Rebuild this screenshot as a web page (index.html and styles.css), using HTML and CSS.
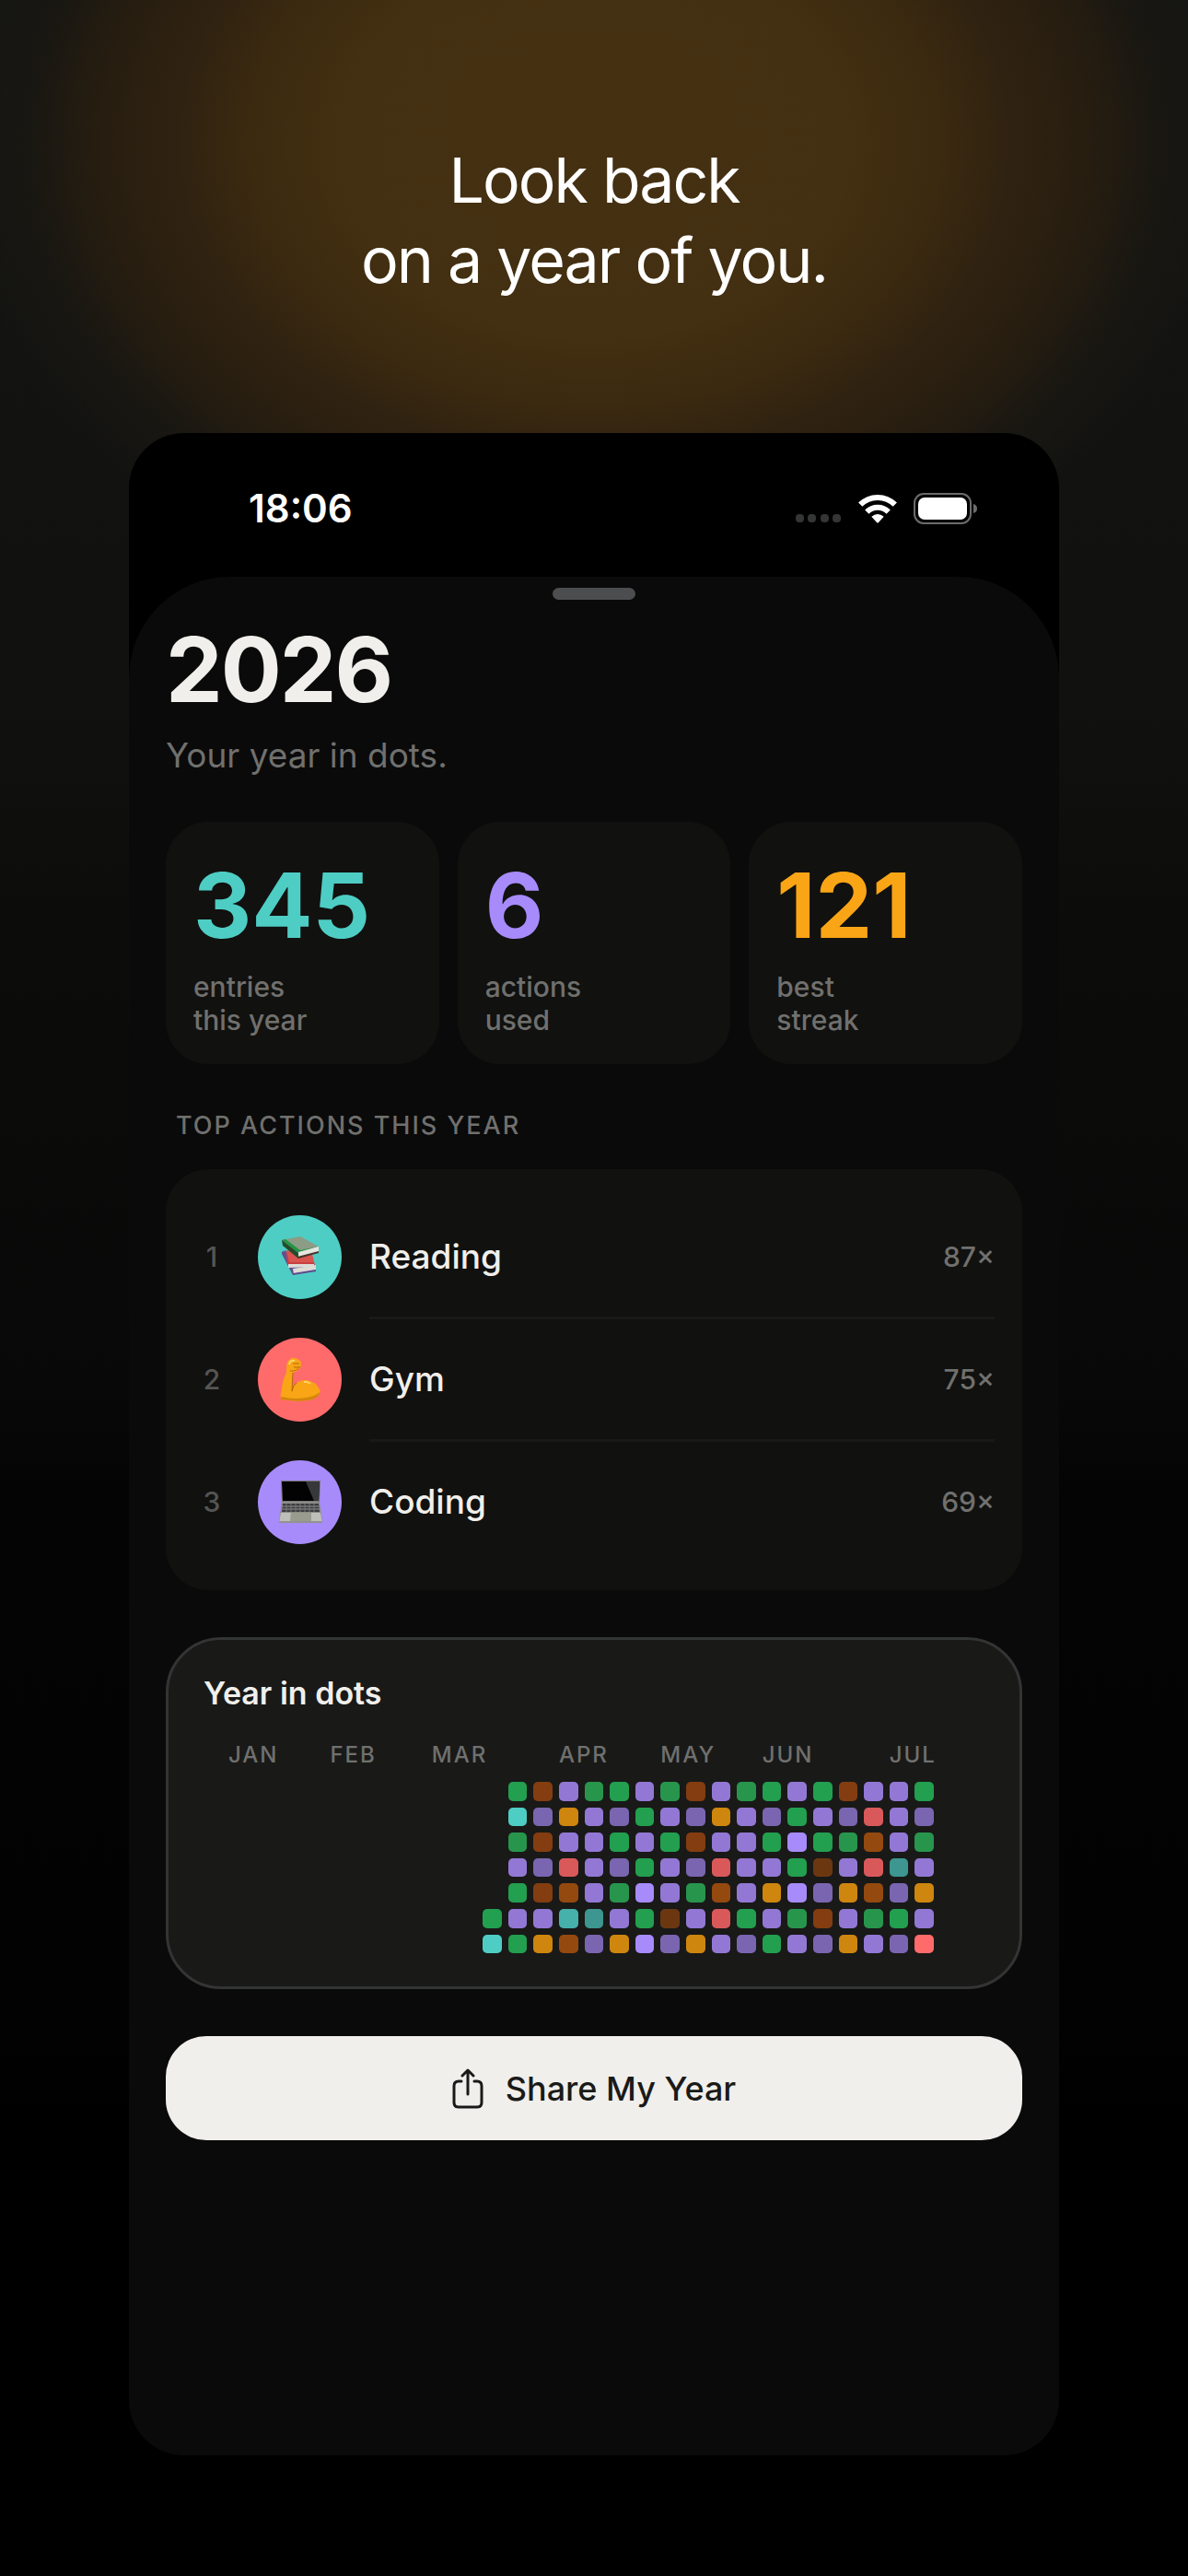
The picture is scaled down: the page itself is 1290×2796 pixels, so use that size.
FILE: index.html
```html
<!DOCTYPE html>
<html lang="en">
<head>
<meta charset="utf-8">
<meta name="viewport" content="width=device-width, initial-scale=1">
<title>Look back on a year of you</title>
<link rel="stylesheet" href="styles.css">
</head>
<body>
<main class="page">
  <h1 class="headline">Look back<br>on a year of you.</h1>

  <div class="phone">
    <div class="status">
      <time class="clock">18:06</time>
      <div class="indicators">
        <svg class="signal" width="50" height="32" viewBox="0 0 50 32" fill="#343535" aria-hidden="true">
          <rect x="0" y="22" width="9" height="9" rx="4"/><rect x="13" y="22" width="9" height="9" rx="4"/><rect x="27" y="22" width="9" height="9" rx="4"/><rect x="40" y="22" width="9" height="9" rx="4"/>
        </svg>
        <svg class="wifi" width="42" height="32" viewBox="0 0 42 32" aria-hidden="true">
          <g fill="none" stroke="#fff" stroke-width="6">
            <path d="M2.200 11.700A26.500 26.500 0 0 1 39.800 11.700"/>
            <path d="M9.300 19.600A16.600 16.600 0 0 1 32.700 19.600"/>
          </g>
          <path d="M14.300 24.800Q21 19.300 27.700 24.800L22 31Q21 32 20 31Z" fill="#fff"/>
        </svg>
        <svg class="battery" width="69" height="34" viewBox="0 0 69 34" aria-hidden="true">
          <rect x="1" y="1" width="61" height="32" rx="10" fill="none" stroke="#6b6b6b" stroke-width="2"/>
          <rect x="5" y="5" width="53" height="24" rx="7" fill="#fff"/>
          <path d="M65 12q4 1 4 5t-4 5z" fill="#6b6b6b"/>
        </svg>
      </div>
    </div>

    <section class="sheet">
      <div class="handle"></div>
      <h2 class="year">2026</h2>
      <p class="tagline">Your year in dots.</p>

      <div class="stats">
        <div class="stat"><strong class="figure teal">345</strong><span class="caption">entries<br>this year</span></div>
        <div class="stat"><strong class="figure violet">6</strong><span class="caption">actions<br>used</span></div>
        <div class="stat"><strong class="figure amber">121</strong><span class="caption">best<br>streak</span></div>
      </div>

      <h3 class="section-title">TOP ACTIONS THIS YEAR</h3>
      <ol class="actions">
        <li class="action">
          <span class="rank">1</span>
          <span class="badge badge-teal">
            <svg width="44" height="46" viewBox="0 0 44 46" aria-hidden="true">
              <path d="M2 18l4 -2 8 17 24 -2 1 5 -25 6z" fill="#65518f"/>
              <path d="M14 36l25 -4v5l-24 5z" fill="#dedbd6"/>
              <path d="M14 41l25 -4v2l-25 4L2 20v-3z" fill="#60498b"/>
              <path d="M7 16l28 4 3 12 -29 -1z" fill="#d9534f"/>
              <path d="M9 30h28v4l-28 1z" fill="#dedbd6"/>
              <path d="M7 16l3 13h27v2H8z" fill="#c73e42"/>
              <path d="M2 5l20 -4 20 11 -22 9z" fill="#8d9c85"/>
              <path d="M2 5l4 -1 16 12 20 -4 -22 7z" fill="#229547"/>
              <path d="M20 18l22 -6v6l-22 6z" fill="#e8e5e0"/>
              <path d="M2 5l18 14v6L3 11z" fill="#244c2c"/>
              <path d="M19 23l23 -6v2l-22 6z" fill="#463428"/>
            </svg>
          </span>
          <div class="entry"><span class="name">Reading</span><span class="count">87×</span></div>
        </li>
        <li class="action">
          <span class="rank">2</span>
          <span class="badge badge-coral">
            <svg width="46" height="48" viewBox="0 0 46 48" aria-hidden="true">
              <path d="M8 12Q8 3 14 1Q18 0 23 4Q25 8 23 12Q19 16 15 17Q14 25 15 33Q20 24 30 25Q40 26 45 37Q43 44 36 46Q24 49 11 47L2 46Q1 42 3 34Q4 24 8 17Z" fill="#f9a516"/>
              <path d="M2 43Q20 47 34 43Q42 41 45 37Q43 44 36 46Q24 49 11 47L2 46Z" fill="#d4860d"/>
              <path d="M15 17L14 37Q15 31 19 28M12 15Q19 16 23 10M15 7h7M16 11h6" fill="none" stroke="#b6690b" stroke-width="1"/>
              <path d="M11 8Q12 3 17 4M27 27Q31 26 34 29" fill="none" stroke="#ffd265" stroke-width="2"/>
            </svg>
          </span>
          <div class="entry"><span class="name">Gym</span><span class="count">75×</span></div>
        </li>
        <li class="action">
          <span class="rank">3</span>
          <span class="badge badge-violet">
            <svg width="48" height="48" viewBox="0 0 48 48" aria-hidden="true">
              <path d="M3 1h43l-1 24H4z" fill="#77777b"/>
              <path d="M4 2h41l-1 21H5z" fill="#030303"/>
              <path d="M30 2h15l-1 21h-5z" fill="#37383c"/>
              <path d="M4 24h41l3 21H1z" fill="#8c8c88"/>
              <path d="M5 26h39l1 9H4z" fill="#3c3d3f"/>
              <path d="M4 29h40M4 32h41" stroke="#909090" stroke-width="1"/>
              <path d="M9 26v9M14 26v9M19 26v9M24 26v9M29 26v9M34 26v9M39 26v9" stroke="#77777a" stroke-width="1"/>
              <path d="M3 36h43l2 11H1z" fill="#bebeba"/>
              <path d="M14 36h22v9H13z" fill="#989b8d"/>
              <path d="M1 45h47v2H1z" fill="#92928f"/>
            </svg>
          </span>
          <div class="entry"><span class="name">Coding</span><span class="count">69×</span></div>
        </li>
      </ol>

      <section class="dots-card">
        <h3 class="dots-title">Year in dots</h3>
        <div class="months">
          <span class="jan">JAN</span><span class="feb">FEB</span><span class="mar">MAR</span><span class="apr">APR</span><span class="may">MAY</span><span class="jun">JUN</span><span class="jul">JUL</span>
        </div>
        <div class="dots">
          <i class="g c12"></i><i class="b"></i><i class="p"></i><i class="gd"></i><i class="g"></i><i class="p"></i><i class="gd"></i><i class="b"></i><i class="p"></i><i class="gd"></i><i class="g"></i><i class="p"></i><i class="g"></i><i class="b"></i><i class="p"></i><i class="p"></i><i class="g"></i>
          <i class="t c12"></i><i class="pd"></i><i class="o"></i><i class="p"></i><i class="pd"></i><i class="g"></i><i class="p"></i><i class="pd"></i><i class="o"></i><i class="p"></i><i class="pd"></i><i class="g"></i><i class="p"></i><i class="pd"></i><i class="r"></i><i class="p"></i><i class="pd"></i>
          <i class="gd c12"></i><i class="b"></i><i class="p"></i><i class="p"></i><i class="g"></i><i class="p"></i><i class="g"></i><i class="b"></i><i class="p"></i><i class="p"></i><i class="g"></i><i class="v"></i><i class="g"></i><i class="gd"></i><i class="bo"></i><i class="p"></i><i class="gd"></i>
          <i class="p c12"></i><i class="pd"></i><i class="r"></i><i class="p"></i><i class="pd"></i><i class="g"></i><i class="p"></i><i class="pd"></i><i class="r"></i><i class="p"></i><i class="p"></i><i class="g"></i><i class="bd"></i><i class="p"></i><i class="r"></i><i class="td"></i><i class="p"></i>
          <i class="g c12"></i><i class="b"></i><i class="bo"></i><i class="p"></i><i class="gd"></i><i class="v"></i><i class="p"></i><i class="gd"></i><i class="bo"></i><i class="p"></i><i class="o"></i><i class="v"></i><i class="pd"></i><i class="o"></i><i class="bo"></i><i class="pd"></i><i class="o"></i>
          <i class="g c11"></i><i class="p"></i><i class="p"></i><i class="tm"></i><i class="td"></i><i class="p"></i><i class="g"></i><i class="bd"></i><i class="p"></i><i class="r"></i><i class="g"></i><i class="p"></i><i class="gd"></i><i class="b"></i><i class="p"></i><i class="gd"></i><i class="g"></i><i class="p"></i>
          <i class="t c11"></i><i class="g"></i><i class="o"></i><i class="bo"></i><i class="pd"></i><i class="o"></i><i class="v"></i><i class="pd"></i><i class="o"></i><i class="p"></i><i class="pd"></i><i class="g"></i><i class="p"></i><i class="pd"></i><i class="o"></i><i class="p"></i><i class="pd"></i><i class="rb"></i>
        </div>
      </section>

      <button class="share" type="button">
        <svg width="34" height="44" viewBox="0 0 34 44" fill="none" stroke="#1a1a18" stroke-width="3" stroke-linecap="round" stroke-linejoin="round" aria-hidden="true">
          <path d="M10 14H7Q2 14 2 19V37Q2 42 7 42H27Q32 42 32 37V19Q32 14 27 14H24"/>
          <path d="M17 28V3M11 8L17 2L23 8"/>
        </svg>
        Share My Year
      </button>
    </section>
  </div>
</main>
</body>
</html>
```
FILE: styles.css
```css
* { box-sizing: border-box; }

body {
  margin: 0;
  background: #000;
  color: #f0efeb;
  font-family: Inter, "Liberation Sans", sans-serif;
}

h1, h2, h3, p, ol { margin: 0; padding: 0; }

.page {
  min-height: 100vh;
  padding: 152px 140px 130px;
  background:
    radial-gradient(645px 490px at 50% 155px, #453012 0%, #432f11 43%, #3b2a10 58%, #302211 70%, #261d10 84%, #191712 95%, rgba(17, 17, 15, 0) 108%),
    linear-gradient(#141513 0%, #11110f 27%, #0c0c0b 36%, #080808 54%, #040404 58%, #020202 79%, #000 82%);
}

.headline {
  color: #fff;
  font-size: 68px;
  font-weight: 400;
  line-height: 87px;
  letter-spacing: -2px;
  text-align: center;
}

.phone {
  margin-top: 144px;
  border-radius: 60px;
  background: #000;
  overflow: hidden;
}

.status {
  display: flex;
  align-items: center;
  justify-content: space-between;
  padding: 57px 89px 49px 130px;
}

.clock {
  color: #fff;
  font-size: 42px;
  font-weight: 600;
  line-height: 50px;
}

.indicators { display: flex; align-items: center; gap: 18px; }

.sheet {
  padding: 12px 40px 342px;
  border-radius: 110px 110px 0 0;
  background: #0a0a0a;
}

.handle {
  width: 90px;
  height: 13px;
  margin: 0 auto 21px;
  border-radius: 7px;
  background: #4c4d4f;
}

.year { font-size: 98px; font-weight: 700; line-height: 110px; letter-spacing: -2px; }

.tagline { margin-top: 14px; color: #70706e; font-size: 37px; line-height: 48px; }

.stats {
  display: grid;
  grid-template-columns: repeat(3, 1fr);
  gap: 20px;
  margin-top: 48px;
}

.stat {
  display: flex;
  flex-direction: column;
  gap: 15px;
  padding: 36px 30px 30px;
  border-radius: 46px;
  background: #11110f;
}

.figure { font-size: 98px; font-weight: 700; line-height: 110px; }
.caption { color: #70706e; font-size: 30px; font-weight: 500; line-height: 36px; }

.teal { color: #4ecdc4; }
.violet { color: #a78bfa; }
.amber { color: #f9a516; }

.section-title {
  margin: 49px 0 29px 11px;
  color: #70706e;
  font-size: 27px;
  font-weight: 500;
  line-height: 36px;
  letter-spacing: 2px;
}

.actions {
  padding: 30px 30px 28px;
  border-radius: 46px;
  background: #11110f;
  list-style: none;
}

.action { display: flex; align-items: center; }

.rank {
  width: 40px;
  margin: 0 30px 3px 0;
  color: #555553;
  font-size: 30px;
  font-weight: 500;
  line-height: 40px;
  text-align: center;
}

.badge {
  display: grid;
  place-items: center;
  width: 91px;
  height: 91px;
  margin: 0 30px 3px 0;
  border-radius: 50%;
}

.badge-teal { background: #4ecdc4; }
.badge-coral { background: #ff6b6b; }
.badge-violet { background: #a78bfa; }

.entry {
  display: flex;
  flex: 1;
  align-items: center;
  justify-content: space-between;
  height: 133px;
  border-bottom: 3px solid #191918;
}

.action:last-child .entry { border-color: transparent; }

.name { font-size: 37px; font-weight: 500; line-height: 48px; }
.count { color: #70706e; font-size: 30px; font-weight: 500; line-height: 40px; }

.dots-card {
  margin-top: 51px;
  padding: 36px 38px;
  border: 3px solid #333434;
  border-radius: 60px;
  background: #191918;
}

.dots-title { font-size: 34px; font-weight: 600; line-height: 44px; }

.months, .dots {
  display: grid;
  grid-template-columns: repeat(28, minmax(0, 1fr));
  column-gap: 7px;
  margin: 0 55px 0 27px;
}

.months {
  margin-top: 30px;
  color: #70706e;
  font-size: 24px;
  font-weight: 500;
  line-height: 30px;
  letter-spacing: 2px;
  white-space: nowrap;
}

.jan { grid-column: 1; }
.feb { grid-column: 5; }
.mar { grid-column: 9; }
.apr { grid-column: 14; }
.may { grid-column: 18; }
.jun { grid-column: 22; }
.jul { grid-column: 27; }

.dots { row-gap: 7px; margin-top: 14px; }
.dots i { aspect-ratio: 1; border-radius: 5px; }
.dots .c11 { grid-column-start: 11; }
.dots .c12 { grid-column-start: 12; }

.g { background: #229f4f; }
.gd { background: #28954d; }
.b { background: #833d10; }
.bd { background: #6b3711; }
.bo { background: #94490f; }
.p { background: #9278d4; }
.pd { background: #7a65b0; }
.v { background: #a78bfa; }
.o { background: #ce860e; }
.r { background: #d9595b; }
.rb { background: #ff6b6b; }
.t { background: #4ecdc4; }
.tm { background: #46b1aa; }
.td { background: #3d9690; }

.share {
  display: flex;
  align-items: center;
  justify-content: center;
  gap: 24px;
  width: 100%;
  height: 113px;
  margin-top: 51px;
  padding: 0;
  border: 0;
  border-radius: 44px;
  background: #f0efeb;
  color: #1a1a18;
  font-family: inherit;
  font-size: 36px;
  font-weight: 500;
  line-height: 48px;
}
```
